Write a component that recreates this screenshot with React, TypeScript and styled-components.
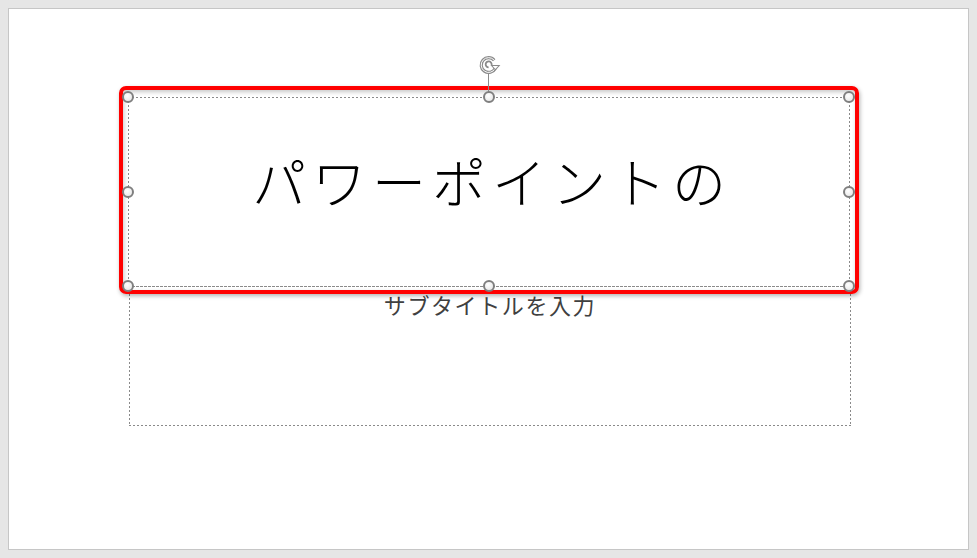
import React from 'react';
import styled, {createGlobalStyle} from 'styled-components';

const GlobalStyle = createGlobalStyle`
  body {
    margin: 0;
    background: #e6e6e6;
    font-family: "Noto Sans CJK JP", "Noto Sans", sans-serif;
  }
`;

const Page = styled.div`
  width: 977px;
  height: 558px;
  padding: 8px;
  box-sizing: border-box;
`;

const Slide = styled.div`
  width: 961px;
  height: 542px;
  box-sizing: border-box;
  border: 1px solid #c6c6c6;
  background: #ffffff;
  padding: 88px 0 0 119px;
  display: flex;
  flex-direction: column;
`;

const dashed = `
  background-image:
    repeating-linear-gradient(to right, #8a8a8a 0 2px, transparent 2px 4px),
    repeating-linear-gradient(to right, #8a8a8a 0 2px, transparent 2px 4px),
    repeating-linear-gradient(to bottom, #8a8a8a 0 2px, transparent 2px 4px),
    repeating-linear-gradient(to bottom, #8a8a8a 0 2px, transparent 2px 4px);
  background-size: 100% 1px, 100% 1px, 1px 100%, 1px 100%;
  background-position: top left, bottom left, top left, top right;
  background-repeat: no-repeat;
`;

const TitleBox = styled.div`
  position: relative;
  width: 722px;
  height: 190px;
  box-sizing: border-box;
  ${dashed}
  display: flex;
  align-items: center;
  justify-content: center;
  padding-bottom: 22px;
`;

const TitleText = styled.div`
  font-size: 54px;
  font-weight: 300;
  letter-spacing: 6px;
  margin-right: -6px;
  color: #000;
  line-height: 1.2;
`;

const SubtitleBox = styled.div`
  width: 722px;
  height: 140px;
  margin-top: -1px;
  margin-left: 1px;
  box-sizing: border-box;
  ${dashed}
  display: flex;
  justify-content: center;
  padding-top: 5px;
`;

const SubtitleText = styled.div`
  font-size: 22px;
  letter-spacing: 1.6px;
  color: #404040;
  line-height: 1.2;
`;

const Highlight = styled.div`
  position: absolute;
  top: -11px;
  left: -9px;
  right: -9px;
  bottom: -7px;
  border: 4px solid #ff0000;
  border-radius: 7px;
  box-shadow: 1px 2px 4px rgba(0, 0, 0, 0.3), inset 1px 2px 4px rgba(0, 0, 0, 0.22);
  pointer-events: none;
`;

const Handle = styled.div<{ $x: number; $y: number }>`
  position: absolute;
  left: ${p => p.$x - 6}px;
  top: ${p => p.$y - 6}px;
  width: 12px;
  height: 12px;
  box-sizing: border-box;
  border: 2px solid #7f7f7f;
  border-radius: 50%;
  background: radial-gradient(circle at 40% 35%, #ffffff, #e4e4e4);
  z-index: 2;
`;

const RotateStem = styled.div`
  position: absolute;
  left: 360px;
  top: -24px;
  width: 1px;
  height: 19px;
  background: #8a8a8a;
  z-index: 1;
`;

const RotateIcon = styled.svg`
  position: absolute;
  left: 351px;
  top: -42px;
  z-index: 2;
`;

const handles = [
    [0, 0], [361, 0], [721, 0],
    [0, 95], [721, 95],
    [0, 189], [361, 189], [721, 189],
];

const App: React.FC = () => {
    return (
        <Page>
            <GlobalStyle/>
            <Slide>
                <TitleBox>
                    <TitleText>パワーポイントの</TitleText>
                    <Highlight/>
                    <RotateStem/>
                    <RotateIcon width="26" height="20" viewBox="0 0 26 20">
                        <path d="M15.2 5.2 A7.4 7.4 0 1 0 16.2 13.4" fill="none" stroke="#8a8a8a" strokeWidth="3.2"/>
                        <path d="M15.2 5.2 A7.4 7.4 0 1 0 16.2 13.4" fill="none" stroke="#ffffff" strokeWidth="1"/>
                        <path d="M9.6 12.4 A3 3 0 1 1 12.6 10" fill="none" stroke="#8a8a8a" strokeWidth="1.8"/>
                        <path d="M11.4 10 L21.4 10 L16.4 15.6 Z" fill="#8a8a8a"/>
                        <path d="M13.6 11 L19.2 11 L16.4 14.1 Z" fill="#ffffff"/>
                    </RotateIcon>
                    {handles.map(([x, y], i) => (
                        <Handle key={i} $x={x} $y={y}/>
                    ))}
                </TitleBox>
                <SubtitleBox>
                    <SubtitleText>サブタイトルを入力</SubtitleText>
                </SubtitleBox>
            </Slide>
        </Page>
    );
};

export default App;
